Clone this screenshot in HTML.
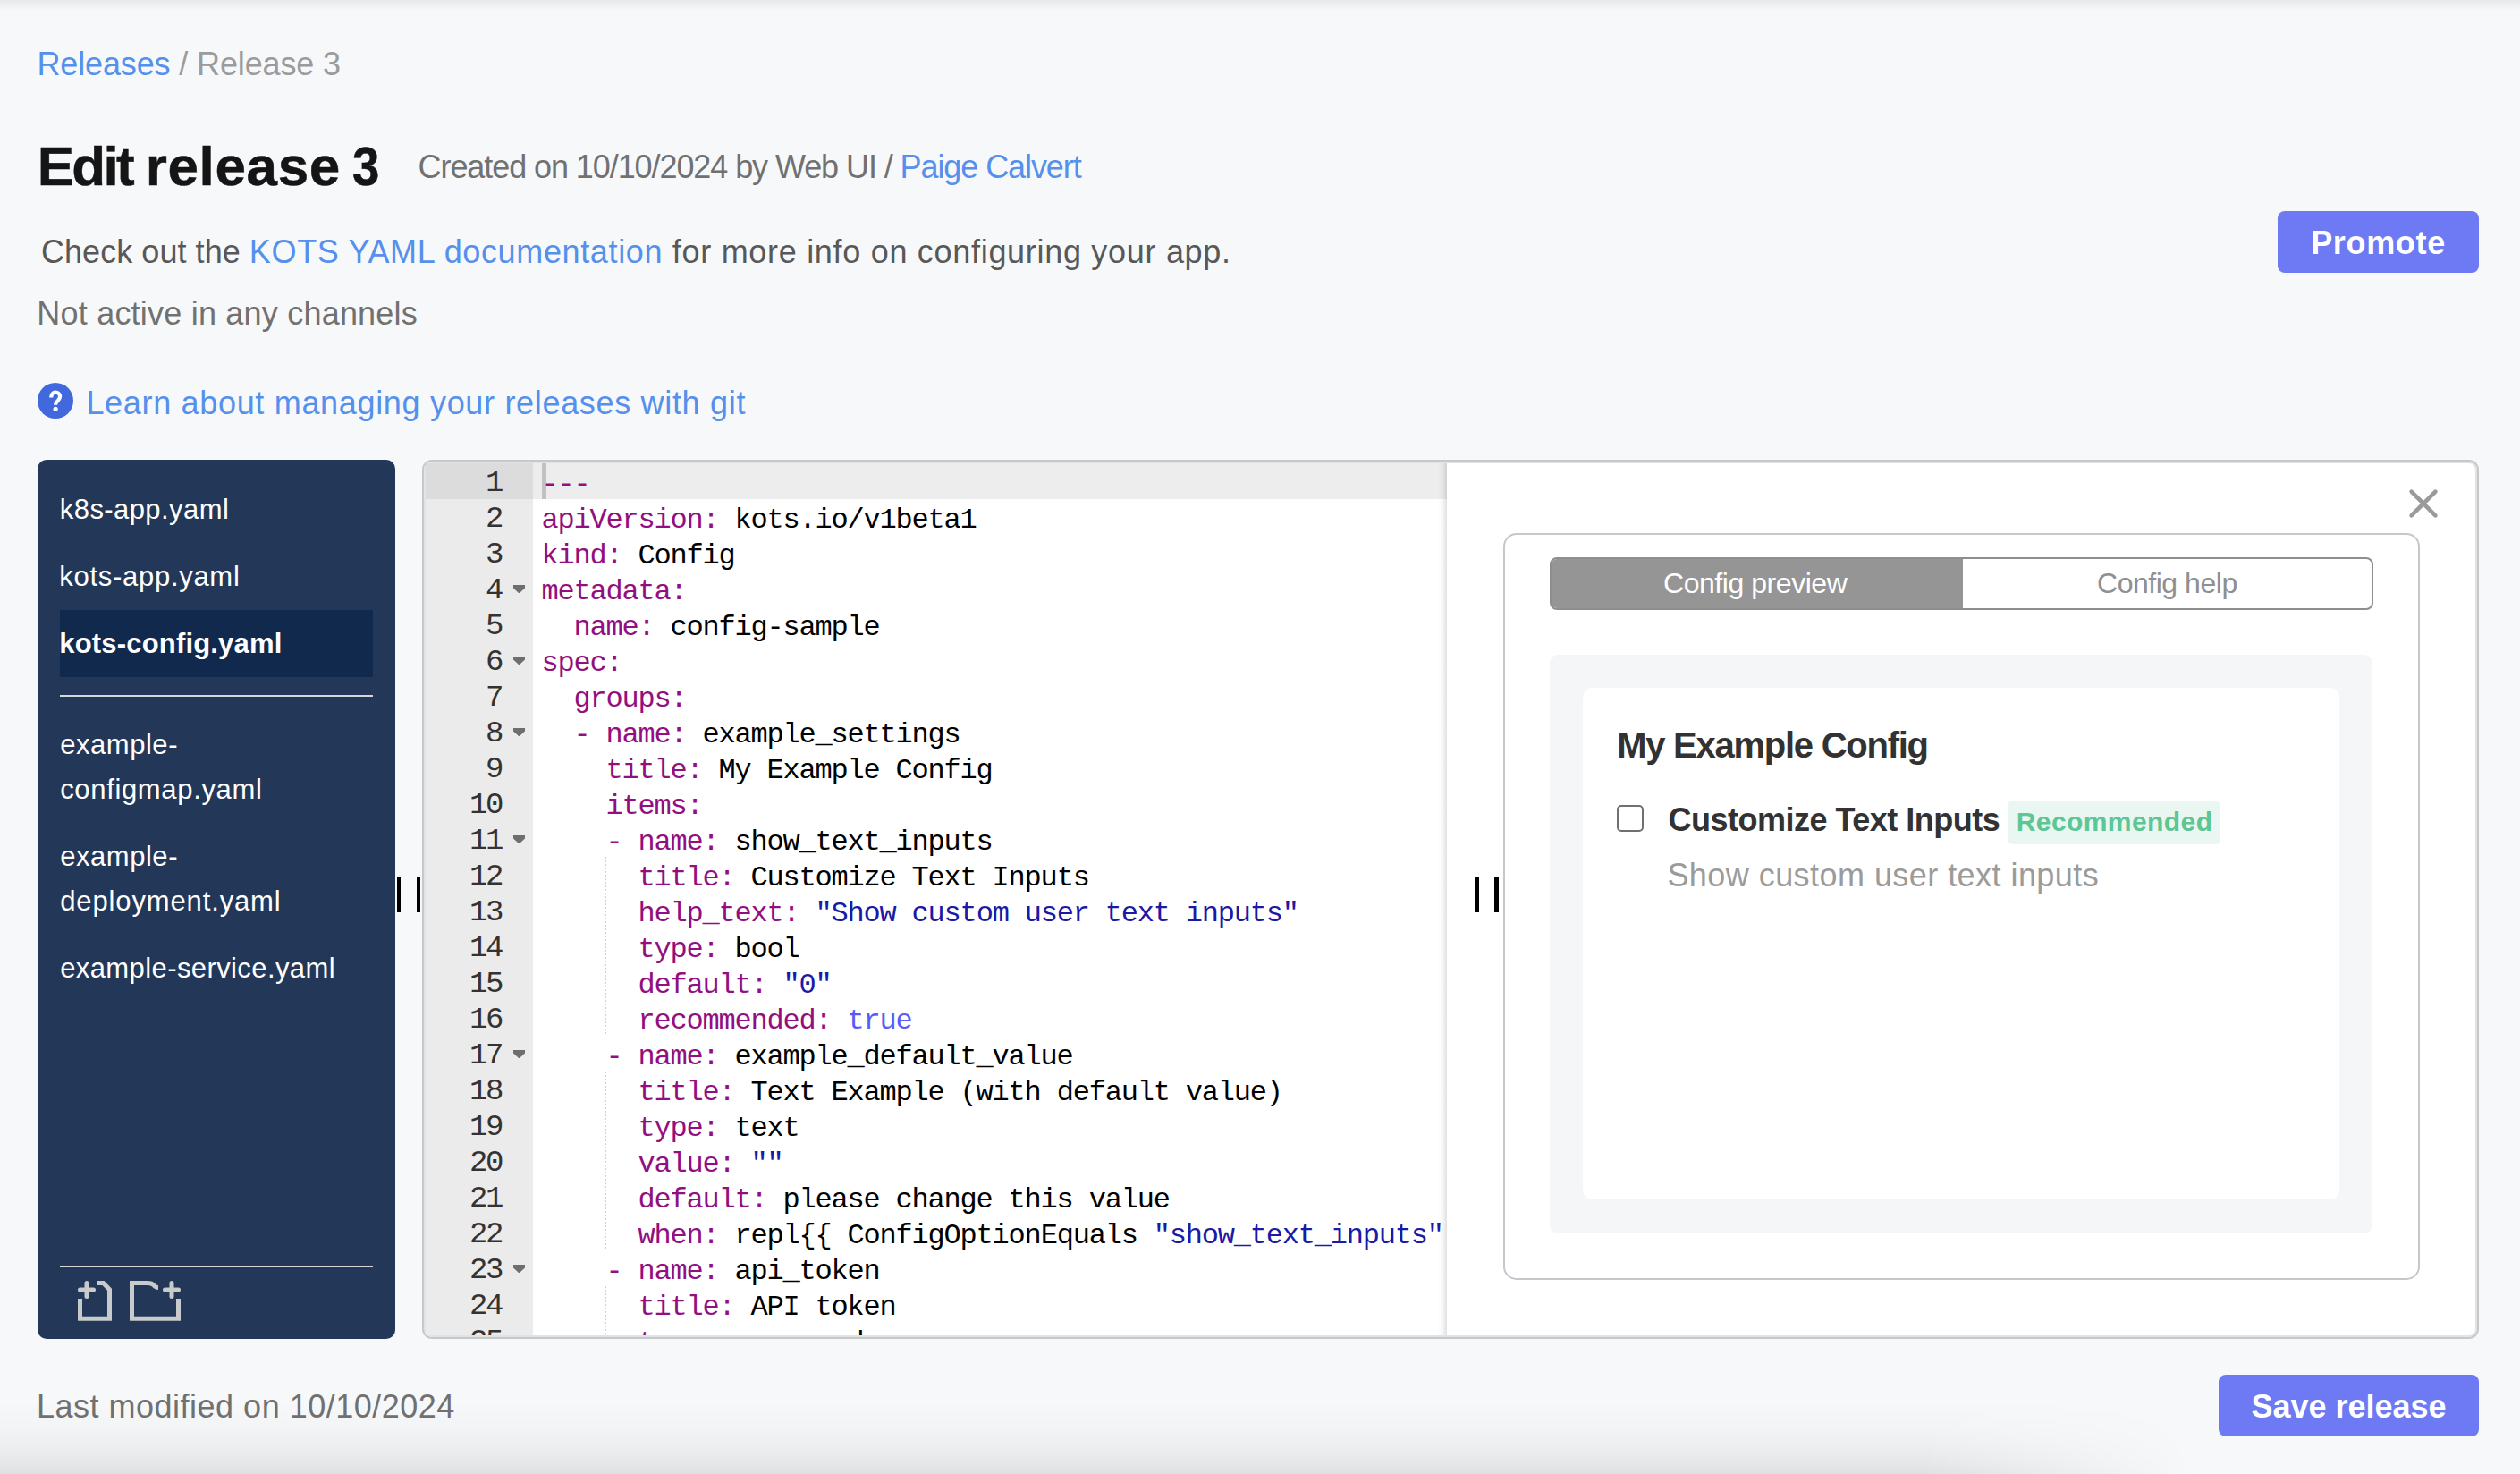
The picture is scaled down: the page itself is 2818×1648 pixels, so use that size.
<!DOCTYPE html>
<html>
<head>
<meta charset="utf-8">
<style>
html,body{margin:0;padding:0;}
body{width:2818px;height:1648px;overflow:hidden;position:relative;background:#f7f8fa;font-family:"Liberation Sans",sans-serif;}
.a{position:absolute;white-space:nowrap;}
.topsh{position:absolute;left:0;top:0;width:2818px;height:12px;background:linear-gradient(to bottom,rgba(0,0,0,0.065),rgba(0,0,0,0));}
.botsh{position:absolute;left:0;top:1566px;width:2818px;height:82px;background:linear-gradient(to bottom,rgba(0,0,0,0) 0%,rgba(0,0,0,0.012) 30%,rgba(0,0,0,0.035) 60%,rgba(0,0,0,0.065) 85%,rgba(0,0,0,0.095) 100%);
  -webkit-mask-image:linear-gradient(to right,#000 0,#000 2150px,rgba(0,0,0,0) 2450px);}
.blue{color:#5590ec;}
.t{line-height:1;}
/* sidebar */
#side{position:absolute;left:42px;top:514px;width:400px;height:983px;background:#233858;border-radius:10px;}
.fi{position:absolute;left:26px;color:#fff;font-size:31px;line-height:1;white-space:nowrap;}
.sep{position:absolute;left:25px;width:350px;height:2px;background:#d6d6d6;}
.bar{position:absolute;width:4px;height:39px;background:#000;top:981px;}
/* editor */
#edframe{position:absolute;left:472px;top:514px;width:2300px;height:983px;box-sizing:border-box;border:2px solid #c5c9cc;border-radius:11px;background:#fff;box-shadow:inset 0 0 0 2px #e3e3e3;}
#gutclip{position:absolute;left:476px;top:518px;width:120px;height:975px;overflow:hidden;background:#ebebeb;}
#codeclip{position:absolute;left:596px;top:518px;width:1022px;height:975px;overflow:hidden;background:#fff;}
.gactive{position:absolute;left:0;top:0;width:122px;height:40px;background:#dcdcdc;}
.cactive{position:absolute;left:0;top:0;width:1022px;height:40px;background:#ededed;}
.cursor{position:absolute;left:10px;top:0;width:5px;height:40px;background:#c2c2c2;}
.nums{position:absolute;left:0;width:85px;top:1.5px;text-align:right;font-family:"Liberation Mono",monospace;font-size:34px;line-height:40px;white-space:pre;color:#333;letter-spacing:-2.4px;}
.code{position:absolute;left:9.5px;top:3.5px;font-family:"Liberation Mono",monospace;font-size:32px;line-height:40px;white-space:pre;color:#000;letter-spacing:-1.2px;}
.k{color:#930f80;}
.s{color:#1a1aa6;}
.c{color:#585cf6;}
.fold{position:absolute;left:98px;}
.guide{position:absolute;left:80px;width:2px;background:repeating-linear-gradient(to bottom,#d0d0d0 0,#d0d0d0 2px,transparent 2px,transparent 4px);}
.cshadow{position:absolute;right:0;top:0;width:10px;height:975px;background:linear-gradient(to right,rgba(0,0,0,0),rgba(0,0,0,0.03) 50%,rgba(0,0,0,0.12));}
/* preview */
#pbox{position:absolute;left:1681px;top:596px;width:1025px;height:835px;box-sizing:border-box;border:2px solid #c4c8cc;border-radius:15px;}
#tabs{position:absolute;left:1733px;top:623px;width:921px;height:59px;box-sizing:border-box;border:2px solid #8e8e8e;border-radius:8px;overflow:hidden;background:#fff;}
#tabact{position:absolute;left:0;top:0;width:460px;height:100%;background:#959595;}
.tabt{position:absolute;font-size:32px;line-height:1;white-space:nowrap;}
#gbox{position:absolute;left:1733px;top:732px;width:920px;height:647px;background:#f5f6f8;border-radius:9px;}
#wcard{position:absolute;left:1770px;top:769px;width:846px;height:572px;background:#fff;border-radius:10px;}
.hv{font-family:"Liberation Sans",sans-serif;}
</style>
</head>
<body>
<div class="topsh"></div>

<!-- breadcrumb -->
<div class="a t" id="bc" style="left:41.5px;top:54px;letter-spacing:-0.14px;font-size:36px;color:#9b9b9b;"><span class="blue">Releases</span> / Release 3</div>

<!-- heading -->
<div class="a t" id="h1" style="left:41.7px;top:155px;letter-spacing:-1.18px;font-size:62px;font-weight:bold;color:#151515;-webkit-text-stroke:0.5px #151515;"><span style="letter-spacing:-2.68px">Edit </span><span style="letter-spacing:0.65px">release </span><span style="margin-left:-5px;display:inline-block;transform:scaleX(0.88);transform-origin:0 0">3</span></div>
<div class="a t" id="created" style="left:467.6px;top:169px;letter-spacing:-1.08px;font-size:36px;color:#717171;">Created on 10/10/2024 by Web UI / <span class="blue">Paige Calvert</span></div>

<div class="a t" id="check" style="left:46px;top:264px;letter-spacing:0.70px;font-size:36px;color:#585858;"><span style="letter-spacing:0.05px">Check out the </span><span class="blue" style="letter-spacing:0.64px">KOTS YAML documentation</span> for more info on configuring your app.</div>
<div class="a t" id="notact" style="left:41.3px;top:333px;letter-spacing:0.21px;font-size:36px;color:#717171;">Not active in any channels</div>

<div class="a" style="left:42px;top:428px;width:40px;height:40px;border-radius:50%;background:#4169dd;"></div>
<svg class="a" style="left:42px;top:428px;" width="40" height="40" viewBox="42 428 40 40"><path d="M57.2 444.6 C57.2 440.6 59.4 438.6 62.1 438.6 C65 438.6 67.1 440.6 67.1 443.2 C67.1 445.4 65.7 446.8 64.4 448.4 C63 450 62 451 62 452.8" stroke="#fff" stroke-width="4.2" fill="none"/><circle cx="62.1" cy="457.3" r="2.6" fill="#fff"/></svg>
<div class="a t blue" id="learn" style="left:96.4px;top:433px;letter-spacing:0.68px;font-size:36px;">Learn about managing your releases with git</div>

<!-- promote -->
<div class="a" style="left:2547px;top:236px;width:225px;height:69px;background:#6d7af3;border-radius:8px;"></div>
<div class="a t" id="promote" style="left:2547px;top:254px;letter-spacing:0.67px;width:225px;text-align:center;font-size:36px;font-weight:bold;color:#fff;">Promote</div>

<!-- sidebar -->
<div id="side">
  <div style="position:absolute;left:25px;top:168px;width:350px;height:75px;background:#11294c;"></div>
  <div class="sep" style="top:263px;"></div>
  <div class="sep" style="top:901px;"></div>
</div>
<div class="a fi" id="f1" style="left:66.8px;top:554px;letter-spacing:0.42px;">k8s-app.yaml</div>
<div class="a fi" id="f2" style="left:66.3px;top:629px;letter-spacing:0.71px;">kots-app.yaml</div>
<div class="a fi" id="f3" style="left:66.3px;top:704px;letter-spacing:0.18px;font-weight:bold;">kots-config.yaml</div>
<div class="a fi" id="f4" style="left:67.2px;top:817px;letter-spacing:0.54px;">example-</div>
<div class="a fi" id="f5" style="left:67.2px;top:867px;letter-spacing:0.66px;">configmap.yaml</div>
<div class="a fi" id="f6" style="left:67.2px;top:942px;letter-spacing:0.54px;">example-</div>
<div class="a fi" id="f7" style="left:67.2px;top:992px;letter-spacing:0.87px;">deployment.yaml</div>
<div class="a fi" id="f8" style="left:67.2px;top:1067px;letter-spacing:0.4px;">example-service.yaml</div>
<div class="bar" style="left:444px;"></div>
<div class="bar" style="left:466px;"></div>
<svg class="a" style="left:60px;top:1420px;" width="160" height="70" viewBox="60 1420 160 70">
<g stroke="#c8cacc" stroke-width="5" fill="none">
<path d="M89.5 1452 V1474.3 H122.5 V1441.8 L115.5 1434.5 H108" stroke-linejoin="miter"/>
<path d="M89.5 1442 H104.5 M97 1434.5 V1449.5" stroke-linecap="round"/>
<path d="M147.5 1452 V1474.3 H199.5 V1452" />
<path d="M147.5 1476 V1434.5 H165 Q170 1434.5 172 1437 Q174 1439.5 177 1439.5"/>
<path d="M184.5 1442 H199.5 M192 1434.5 V1449.5" stroke-linecap="round"/>
</g></svg>

<!-- editor -->
<div id="edframe"></div>
<div id="gutclip"><div class="gactive"></div><div class="nums">1
2
3
4
5
6
7
8
9
10
11
12
13
14
15
16
17
18
19
20
21
22
23
24
25
26</div><svg class="fold" style="top:136px" width="13" height="10" viewBox="0 0 13 10"><polygon points="0,0 13,0 13,3.5 7,9 6,9 0,3.5" fill="#6e6e6e"/></svg><svg class="fold" style="top:216px" width="13" height="10" viewBox="0 0 13 10"><polygon points="0,0 13,0 13,3.5 7,9 6,9 0,3.5" fill="#6e6e6e"/></svg><svg class="fold" style="top:296px" width="13" height="10" viewBox="0 0 13 10"><polygon points="0,0 13,0 13,3.5 7,9 6,9 0,3.5" fill="#6e6e6e"/></svg><svg class="fold" style="top:416px" width="13" height="10" viewBox="0 0 13 10"><polygon points="0,0 13,0 13,3.5 7,9 6,9 0,3.5" fill="#6e6e6e"/></svg><svg class="fold" style="top:656px" width="13" height="10" viewBox="0 0 13 10"><polygon points="0,0 13,0 13,3.5 7,9 6,9 0,3.5" fill="#6e6e6e"/></svg><svg class="fold" style="top:896px" width="13" height="10" viewBox="0 0 13 10"><polygon points="0,0 13,0 13,3.5 7,9 6,9 0,3.5" fill="#6e6e6e"/></svg></div>
<div id="codeclip"><div class="cactive"></div><div class="cursor"></div><div class="guide" style="top:440px;height:200px"></div><div class="guide" style="top:680px;height:200px"></div><div class="guide" style="top:920px;height:120px"></div><div class="code"><span class="k">---</span>
<span class="k">apiVersion:</span> kots.io/v1beta1
<span class="k">kind:</span> Config
<span class="k">metadata:</span>
  <span class="k">name:</span> config-sample
<span class="k">spec:</span>
  <span class="k">groups:</span>
  <span class="k">- name:</span> example_settings
    <span class="k">title:</span> My Example Config
    <span class="k">items:</span>
    <span class="k">- name:</span> show_text_inputs
      <span class="k">title:</span> Customize Text Inputs
      <span class="k">help_text:</span> <span class="s">&quot;Show custom user text inputs&quot;</span>
      <span class="k">type:</span> bool
      <span class="k">default:</span> <span class="s">&quot;0&quot;</span>
      <span class="k">recommended:</span> <span class="c">true</span>
    <span class="k">- name:</span> example_default_value
      <span class="k">title:</span> Text Example (with default value)
      <span class="k">type:</span> text
      <span class="k">value:</span> <span class="s">&quot;&quot;</span>
      <span class="k">default:</span> please change this value
      <span class="k">when:</span> repl{{ ConfigOptionEquals <span class="s">&quot;show_text_inputs&quot;</span> 1 }}
    <span class="k">- name:</span> api_token
      <span class="k">title:</span> API token
      <span class="k">type:</span> password
      <span class="k">required:</span> true</div><div class="cshadow"></div></div>
<div class="bar" style="left:1649px;top:981px;width:5px;"></div>
<div class="bar" style="left:1671px;top:981px;width:5px;"></div>

<!-- preview -->
<svg class="a" style="left:2690px;top:543px;" width="40" height="40" viewBox="0 0 40 40"><path d="M6.6 6.6 L33.4 33.4 M33.4 6.6 L6.6 33.4" stroke="#9a9a9a" stroke-width="4.6" stroke-linecap="round"/></svg>
<div id="pbox"></div>
<div id="tabs"><div id="tabact"></div></div>
<div class="a tabt" id="tab1" style="left:1860px;top:636px;letter-spacing:-0.45px;color:#fff;">Config preview</div>
<div class="a tabt" id="tab2" style="left:2345px;top:636px;letter-spacing:-0.47px;color:#8f8f8f;">Config help</div>
<div id="gbox"></div>
<div id="wcard"></div>
<div class="a t" id="mec" style="left:1808.2px;top:813px;letter-spacing:-1.26px;font-size:40px;font-weight:bold;color:#323232;">My Example Config</div>
<div class="a" style="left:1808px;top:900px;width:30px;height:30px;box-sizing:border-box;border:2px solid #707070;border-radius:5px;"></div>
<div class="a t" id="cti" style="left:1865.4px;top:899px;letter-spacing:-0.5px;font-size:36px;font-weight:bold;color:#323232;">Customize Text Inputs</div>
<div class="a" style="left:2245px;top:895px;width:238px;height:49px;background:#eaf6f1;border-radius:6px;"></div>
<div class="a t" id="rec" style="left:2254.7px;top:904px;letter-spacing:0.43px;font-size:30px;font-weight:bold;color:#5cc794;">Recommended</div>
<div class="a t" id="scu" style="left:1864.4px;top:961px;letter-spacing:0.45px;font-size:36px;color:#9b9b9b;">Show custom user text inputs</div>

<!-- footer -->
<div class="a t" id="lastmod" style="left:41px;top:1555px;letter-spacing:0.5px;font-size:36px;color:#717171;">Last modified on 10/10/2024</div>
<div class="a" style="left:2481px;top:1537px;width:291px;height:69px;background:#6d7af3;border-radius:8px;"></div>
<div class="a t" id="save" style="left:2481px;top:1555px;width:291px;text-align:center;font-size:36px;font-weight:bold;color:#fff;">Save release</div>

<div class="botsh"></div>
</body>
</html>
